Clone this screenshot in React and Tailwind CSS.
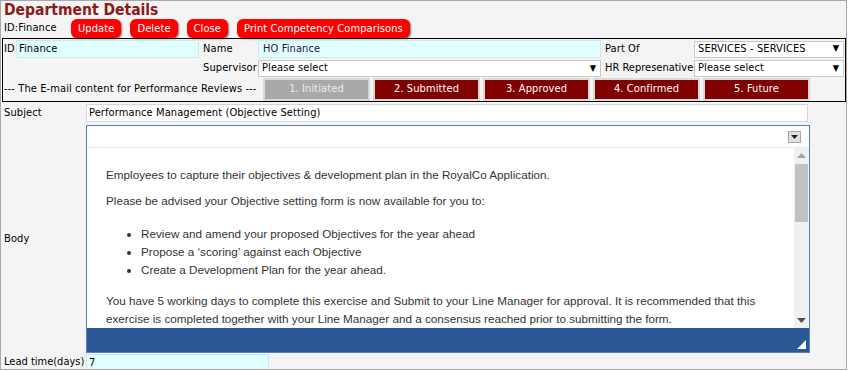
import React from "react";

const ui = "font-['DejaVu_Sans_Condensed','DejaVu_Sans',sans-serif]";

function RedButton({ label }) {
    return (
        <button className="h-[19px] px-[7px] rounded-[6px] bg-[#ff0000] text-white text-[11px] leading-[19px] shadow-[1px_1px_2px_#777]">
            {label}
        </button>
    );
}

function Select({ value, width }) {
    return (
        <div className={`h-[17px] ${width} bg-white border border-[#c8c8c8] flex items-center justify-between pl-[3px] pr-[4px]`}>
            <span>{value}</span>
            <span className="text-[9px]">▼</span>
        </div>
    );
}

function Tab({ label, active }) {
    return (
        <div
            className={`w-[107px] h-[23px] border-2 border-[#d9d9d9] flex items-center justify-center text-[11px] ${
                active ? "bg-[#a9a9a9] text-[#eeeeee]" : "bg-[#800000] text-white"
            }`}
        >
            {label}
        </div>
    );
}

function Editor() {
    return (
        <div className="w-[724px] h-[228px] border border-[#5a7dbd] flex flex-col bg-white">
            <div className="h-[22px] flex items-center justify-end pr-[8px] border-b border-[#e6e6e6]">
                <div className="w-[13px] h-[12px] bg-[#e0e0e0] border border-[#a8a8a8] flex items-center justify-center">
                    <svg width="7" height="4" viewBox="0 0 7 4">
                        <path d="M0 0h7L3.5 4z" fill="#222" />
                    </svg>
                </div>
            </div>
            <div className="flex-1 flex min-h-0">
                <div className="flex-1 overflow-hidden pt-[18px] pl-[19px] pr-[6px] text-[11.7px] leading-[18px] tracking-normal whitespace-normal text-[#333] font-['Liberation_Sans',Arial,sans-serif]">
                    <p>Employees to capture their objectives &amp; development plan in the RoyalCo Application.</p>
                    <p className="mt-[8px]">Please be advised your Objective setting form is now available for you to:</p>
                    <ul className="list-disc pl-[35px] mt-[15px] mb-[13px]">
                        <li>Review and amend your proposed Objectives for the year ahead</li>
                        <li>Propose a ‘scoring’ against each Objective</li>
                        <li>Create a Development Plan for the year ahead.</li>
                    </ul>
                    <p>You have 5 working days to complete this exercise and Submit to your Line Manager for approval. It is recommended that this exercise is completed together with your Line Manager and a consensus reached prior to submitting the form.</p>
                </div>
                <div className="w-[15px] bg-[#f0f0f0] flex flex-col items-center pt-[5px] pb-[5px]">
                    <svg width="9" height="5" viewBox="0 0 9 5">
                        <path d="M4.5 0L9 5H0z" fill="#a3a3a3" />
                    </svg>
                    <div className="w-[13px] h-[58px] bg-[#c1c1c1] mt-[6px]" />
                    <div className="flex-1" />
                    <svg width="9" height="5" viewBox="0 0 9 5">
                        <path d="M0 0h9L4.5 5z" fill="#505050" />
                    </svg>
                </div>
            </div>
            <div className="h-[24px] bg-[#2b5796] flex items-end justify-end pr-[3px] pb-[3px]">
                <svg width="9" height="9" viewBox="0 0 9 9">
                    <path d="M9 0V9H0z" fill="#ffffff" />
                </svg>
            </div>
        </div>
    );
}

export default function App() {
    return (
        <div className={`w-[848px] h-[371px] bg-white ${ui} text-[11px] tracking-[0.1px] whitespace-nowrap text-black`}>
            <div className="w-[847px] h-[370px] border border-[#a8a8a8] bg-[#f4f4f4] flex flex-col overflow-hidden">
                <h1 className="text-[15.5px] font-bold text-[#8b1a1a] leading-[17px] pl-[3px] pt-[1px] tracking-normal">Department Details</h1>
                <div className="flex items-center h-[21px] pl-[3px]">
                    <span className="w-[67px]">ID:Finance</span>
                    <div className="flex gap-[9px]">
                        <RedButton label="Update" />
                        <RedButton label="Delete" />
                        <RedButton label="Close" />
                        <RedButton label="Print Competency Comparisons" />
                    </div>
                </div>
                <div className="ml-[1px] w-[844px] border border-black flex flex-col">
                    <div className="grid grid-cols-[13px_183px_59px_343px_93px_150px] items-center h-[20px]">
                        <span className="pl-[1px]">ID</span>
                        <div className="h-[18px] bg-[#e0ffff] border border-[#d0e8e8] pl-[2px] leading-[16px]">Finance</div>
                        <span className="pl-[4px]">Name</span>
                        <div className="h-[18px] bg-[#e0ffff] border border-[#d0e8e8] pl-[4px] leading-[16px] text-[#2a1248]">HO Finance</div>
                        <span className="pl-[4px]">Part Of</span>
                        <Select value="SERVICES - SERVICES" width="w-[150px]" />
                    </div>
                    <div className="grid grid-cols-[13px_183px_59px_343px_93px_150px] items-center h-[19px]">
                        <span />
                        <span />
                        <span className="pl-[4px]">Supervisor</span>
                        <Select value="Please select" width="w-[343px]" />
                        <span className="pl-[4px] tracking-normal">HR Represenative</span>
                        <Select value="Please select" width="w-[150px]" />
                    </div>
                    <div className="flex items-center h-[23px]">
                        <span className="w-[260px] pl-[1px]">--- The E-mail content for Performance Reviews ---</span>
                        <div className="flex gap-[3px]">
                            <Tab label="1. Initiated" active />
                            <Tab label="2. Submitted" />
                            <Tab label="3. Approved" />
                            <Tab label="4. Confirmed" />
                            <Tab label="5. Future" />
                        </div>
                    </div>
                </div>
                <div className="flex items-center mt-[2px] h-[18px]">
                    <span className="w-[85px] pl-[3px]">Subject</span>
                    <div className="w-[722px] h-[18px] bg-white border border-[#d6d6d6] pl-[2px] leading-[16px]">Performance Management (Objective Setting)</div>
                </div>
                <div className="flex items-center mt-[3px]">
                    <span className="w-[85px] pl-[3px]">Body</span>
                    <Editor />
                </div>
                <div className="flex items-center mt-[1px]">
                    <span className="w-[85px] pl-[3px] tracking-normal">Lead time(days)</span>
                    <div className="w-[183px] h-[17px] bg-[#e0ffff] border border-[#d0e8e8] pl-[2px] leading-[15px]">7</div>
                </div>
            </div>
        </div>
    );
}
